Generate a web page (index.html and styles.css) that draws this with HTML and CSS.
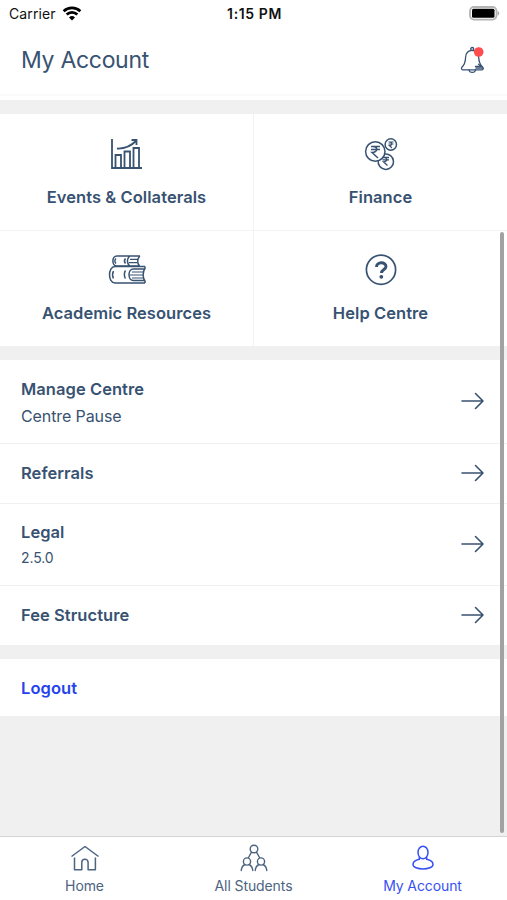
FILE: index.html
```html
<!DOCTYPE html>
<html lang="en">
<head>
  <meta charset="UTF-8">
  <meta name="viewport" content="width=device-width, initial-scale=1.0">
  <title>My Account</title>
  <link rel="stylesheet" href="styles.css">
</head>
<body>

  <div class="status-bar">
    <div class="carrier">
      <span>Carrier</span>
      <svg width="20" height="15" viewBox="0 0 18 14" fill="none" stroke="#000" stroke-width="2.5">
        <path d="M1.2 4.9a11.2 11.2 0 0 1 15.6 0"/>
        <path d="M4 8a7.2 7.2 0 0 1 10 0"/>
        <path d="M9 13.5L6.2 10.7a4 4 0 0 1 5.6 0z" fill="#000" stroke="none"/>
      </svg>
    </div>
    <div class="time">1:15 PM</div>
    <div class="battery">
      <svg width="31" height="15" viewBox="0 0 31 15">
        <rect x="1" y="1" width="26.5" height="12.6" rx="4" fill="#fff" stroke="#b4b4b4" stroke-width="1.8"/>
        <rect x="3" y="2.8" width="22.5" height="9" rx="1.5" fill="#000"/>
        <path d="M28.6 5v4.6c2.2-.8 2.2-3.8 0-4.6z" fill="#aaa"/>
      </svg>
    </div>
  </div>

  <header class="header">
    <h1>My Account</h1>
    <svg class="bell" width="26" height="28" viewBox="0 0 26 28" fill="none" stroke="#385272" stroke-width="1.3" stroke-linecap="round" stroke-linejoin="round">
      <circle cx="12.2" cy="3" r="1.5"/>
      <path d="M12.2 4.3c-4.2 0-6.4 2.9-6.6 7.2-.2 4.8-.9 7.2-3.7 9.8-.8.8-.3 2.5.7 2.5h19.6c1 0 1.4-1.6.6-2.4-2.8-2.6-3.9-5.1-4.1-9.9-.2-4.3-2.3-7.2-6.5-7.2z"/>
      <path d="M9 24c.5 3.2 6 3.2 6.5 0M18.5 18.2l2 1.500M15.5 20.5h6.5M16 22.2h7"/>
      <circle cx="18.700" cy="6" r="4.8" fill="#ff4d4f" stroke="none"/>
    </svg>
  </header>

  <main class="content">
    <div class="grid">
      <div class="tile">
        <svg width="34" height="34" viewBox="0 0 34 34" fill="none" stroke="#385272" stroke-width="1.8">
          <path d="M2 2v29h30"/>
          <path d="M5.5 31V18H11v13M14.5 31V14.5H20V31M23.500 31V11H29v20"/>
          <path d="M7 11.5c8 .5 14-2.5 19.500-8M21.500 3h5v5"/>
        </svg>
        <span>Events &amp; Collaterals</span>
      </div>
      <div class="tile">
        <svg width="34" height="34" viewBox="0 0 34 34" fill="none" stroke="#385272" stroke-width="1.5">
          <circle cx="11.3" cy="14.5" r="9.700"/>
          <circle cx="26.800" cy="7.5" r="5.700"/>
          <path d="M20.500 17.100A7.700 7.700 0 1 1 14.200 23.500"/>
          <path d="M7 9.500h9M7 12.500h9M7.500 9.500c7-1 7 6 .5 6l6 5.500"/>
          <path d="M24.500 5h5M24.500 7h5M25 5c4 0 3.500 3.500.3 3.500L28 11" stroke-width="1.100"/>
          <path d="M18.500 20.500H25M18.500 22.800H25M19 20.500c5-.5 5 4.300.5 4.300l4 3.700" stroke-width="1.300"/>
        </svg>
        <span>Finance</span>
      </div>
      <div class="tile">
        <svg width="38" height="34" viewBox="0 0 38 34" fill="none" stroke="#385272" stroke-width="1.5" stroke-linejoin="round">
          <path d="M32 3H9c-5.500 0-5.500 10 0 10h22.500M32 3c-3 2.500-3 7.500-.5 10M21.500 3c-2.500 3-2.500 7 0 10"/>
          <path d="M37 13.500H7c-7.300 0-7.300 16.500 0 16.500h30M37 13.500v2c-2.500 3-2.500 9.500 0 12.500v2M37 16H25.500c-6 0-6 11.500 0 11.500H37"/>
          <path d="M8 5.500c-1.500 1.500-1.500 3.500 0 5M17.500 5.500c-1.300 1.500-1.300 3.500 0 5M5.500 18c-1 2-1 5.500 0 7.500M17.500 17.500c-1.500 2-1.500 6 0 8"/>
          <path d="M22 6.300h8M21 9.700h8M24 19h11M22 22h13M24 25h11" stroke-width="1.200"/>
        </svg>
        <span>Academic Resources</span>
      </div>
      <div class="tile">
        <svg width="34" height="34" viewBox="0 0 34 34" fill="none" stroke="#385272">
          <circle cx="17" cy="16.700" r="14.600" stroke-width="1.700"/>
          <path d="M12.500 14c0-5.500 9.500-5.500 9.500-.5 0 3-4.500 3-4.500 6.500" stroke-width="2.900"/>
          <circle cx="17.300" cy="23.800" r="1.900" fill="#385272" stroke="none"/>
        </svg>
        <span>Help Centre</span>
      </div>
    </div>

    <div class="list">
      <div class="row manage">
        <div>
          <h2>Manage Centre</h2>
          <p>Centre Pause</p>
        </div>
        <svg class="arrow" viewBox="0 0 24 18"><path d="M1 9h21M14.500 1.500L22 9l-7.500 7.500"/></svg>
      </div>
      <div class="row referrals">
        <h2>Referrals</h2>
        <svg class="arrow" viewBox="0 0 24 18"><path d="M1 9h21M14.500 1.500L22 9l-7.500 7.500"/></svg>
      </div>
      <div class="row legal">
        <div>
          <h2>Legal</h2>
          <p class="version">2.5.0</p>
        </div>
        <svg class="arrow" viewBox="0 0 24 18"><path d="M1 9h21M14.500 1.500L22 9l-7.500 7.500"/></svg>
      </div>
      <div class="row fees">
        <h2>Fee Structure</h2>
        <svg class="arrow" viewBox="0 0 24 18"><path d="M1 9h21M14.500 1.500L22 9l-7.500 7.500"/></svg>
      </div>
    </div>

    <div class="row logout">
      <h2>Logout</h2>
    </div>
  </main>

  <nav class="tabs">
    <div class="tab">
      <svg width="30" height="28" viewBox="0 0 30 28" fill="none" stroke="#4c6480" stroke-width="1.5" stroke-linejoin="round">
        <path d="M1.500 12.500L15 2.500l13.500 10"/>
        <path d="M4.500 13.500v12.200h7.300v-7.200c0-4.300 6.300-4.300 6.300 0v7.200h7.300V13.500"/>
      </svg>
      <span>Home</span>
    </div>
    <div class="tab">
      <svg width="30" height="28" viewBox="0 0 30 28" fill="none" stroke="#4c6480" stroke-width="1.4" stroke-linecap="round">
        <circle cx="15" cy="5" r="3.800"/>
        <path d="M12.500 8.200l-3 5.300M17.500 8.200l3 5.300"/>
        <circle cx="8" cy="17.500" r="3.600"/>
        <circle cx="22" cy="17.500" r="3.600"/>
        <path d="M2.200 26.500c.3-3.200 1.800-5 3.800-6M13.800 26.500c-.3-3.200-1.800-5-3.800-6M16.200 26.500c.3-3.200 1.800-5 3.800-6M27.800 26.500c-.3-3.200-1.800-5-3.800-6"/>
      </svg>
      <span>All Students</span>
    </div>
    <div class="tab active">
      <svg width="30" height="28" viewBox="0 0 30 28" fill="none" stroke="#3651f2" stroke-width="1.5">
        <ellipse cx="15" cy="8.500" rx="5" ry="6.300"/>
        <path d="M11.300 13.300v2C7.500 16.100 5 17.500 5 20.400c0 6 20 6 20 0 0-2.900-2.500-4.300-6.300-5.100v-2"/>
      </svg>
      <span>My Account</span>
    </div>
  </nav>

  <div class="scrollbar"></div>

</body>
</html>
```
FILE: styles.css
```css
* {
  box-sizing: border-box;
}

body {
  margin: 0;
  height: 900px;
  display: flex;
  flex-direction: column;
  position: relative;
  overflow: hidden;
  background-color: #f0f0f0;
  color: #385272;
  font-family: Inter, "Liberation Sans", sans-serif;
  white-space: nowrap;
}

svg {
  display: block;
}

h1, h2, p {
  margin: 0;
}

.status-bar {
  height: 28px;
  padding: 0 7px 2px 9px;
  display: grid;
  grid-template-columns: 1fr auto 1fr;
  align-items: center;
  background-color: #fff;
  color: #111;
  font-size: 14px;
}

.carrier {
  display: flex;
  align-items: center;
  gap: 6px;
  letter-spacing: 0.1px;
}

.time {
  font-weight: 600;
  letter-spacing: 0.6px;
}

.battery {
  display: flex;
  justify-content: flex-end;
}

.header {
  height: 68px;
  padding: 0 21px 2px;
  display: flex;
  align-items: center;
  justify-content: space-between;
  background-color: #fff;
  border-bottom: 2px solid #fafafa;
}

.header h1 {
  font-size: 23px;
  font-weight: 400;
  letter-spacing: -0.3px;
}

.content {
  flex: 1;
  border-top: 4px solid #fff;
}

.grid {
  margin-top: 14px;
  display: grid;
  grid-template-columns: 1fr 1fr;
  grid-template-rows: 116px 115px;
  gap: 1px;
  background-color: #f1f3f5;
}

.tile {
  padding-top: 23px;
  display: flex;
  flex-direction: column;
  align-items: center;
  gap: 15px;
  background-color: #fff;
  font-size: 16.5px;
  font-weight: 600;
  line-height: 22px;
  letter-spacing: 0.06px;
}

.tile:nth-child(n+3) {
  padding-top: 22px;
}

.list {
  margin: 14px 0;
}

.row {
  padding: 0 22px 2px 21px;
  display: flex;
  align-items: center;
  justify-content: space-between;
  background-color: #fff;
  border-bottom: 1px solid #f0f0f0;
}

.row h2 {
  font-size: 16.5px;
  font-weight: 600;
  line-height: 24px;
  letter-spacing: 0.06px;
}

.row p {
  margin-top: 3px;
  font-size: 16px;
  line-height: 24px;
  letter-spacing: -0.1px;
}

.row .version {
  margin-top: 2px;
  font-size: 14px;
}

.manage {
  height: 84px;
}

.referrals {
  height: 60px;
}

.legal {
  height: 82px;
}

.manage > div,
.legal > div {
  padding-top: 3px;
}

.fees {
  height: 59px;
  border-bottom: none;
}

.logout {
  height: 57px;
  padding-bottom: 0;
  border-bottom: none;
  color: #2443ee;
}

.arrow {
  width: 24px;
  height: 18px;
  fill: none;
  stroke: #385272;
  stroke-width: 1.6;
  stroke-linecap: round;
  stroke-linejoin: round;
}

.tabs {
  height: 64px;
  padding-top: 7px;
  display: grid;
  grid-template-columns: repeat(3, 1fr);
  background-color: #fff;
  border-top: 1px solid #d4d4d4;
}

.tab {
  display: flex;
  flex-direction: column;
  align-items: center;
  gap: 5px;
  color: #4c6480;
  font-size: 14px;
  line-height: 18px;
  letter-spacing: -0.1px;
}

.tab.active {
  color: #3651f2;
}

.scrollbar {
  position: absolute;
  top: 232px;
  right: 3px;
  width: 4px;
  height: 601px;
  border-radius: 2px;
  background-color: #a2a2a2;
}
```
